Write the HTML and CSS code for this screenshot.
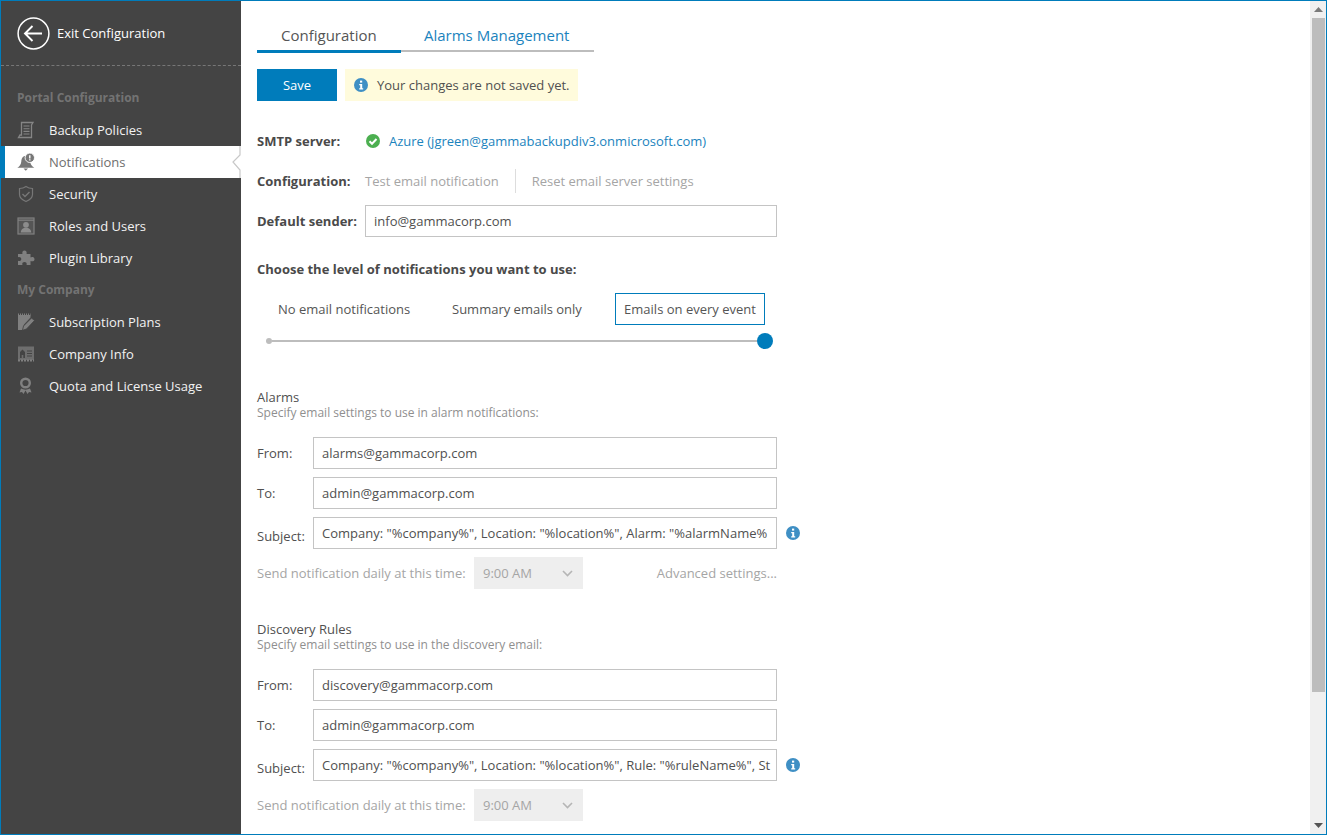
FILE: index.html
```html
<!DOCTYPE html>
<html lang="en">
<head>
<meta charset="utf-8">
<title>Portal Configuration - Notifications</title>
<link rel="stylesheet" href="styles.css">
</head>
<body>
<div class="window">
  <aside class="sidebar">
    <a class="exit">
      <svg class="exit-icon" width="33" height="33" viewBox="0 0 33 33"><circle cx="16.5" cy="16.5" r="15.4" fill="none" stroke="#fff" stroke-width="1.5"/><path d="M8 16.500h17M15.500 9l-7.500 7.500 7.500 7.500" fill="none" stroke="#fff" stroke-width="1.900"/></svg>
      <span>Exit Configuration</span>
    </a>
    <div class="nav">
      <div class="nav-heading">Portal Configuration</div>
      <a class="nav-item">
        <svg class="nav-icon" viewBox="0 0 18 18"><path d="M4.500 1.500H16l-1.500 2.500v12.500H1.500l1.500-2.500h1.500z" fill="none" stroke="#858585" stroke-width="1.300"/><path d="M6.500 5h6M6.500 7.700h6M6.500 10.400h6M6.500 13h6" stroke="#858585" stroke-width="1.100"/></svg>
        <span>Backup Policies</span>
      </a>
      <a class="nav-item active">
        <svg class="nav-icon" viewBox="0 0 18 18"><path d="M8.500 3C5.500 3 4.500 5.500 4.300 8.500 4.100 11.500 2.500 13.500 .3 14.800h17c-2-1.300-3.600-2.800-3.900-5z" fill="#777"/><path d="M6.500 15.500h4.500L8.800 17.800z" fill="#777"/><circle cx="12.800" cy="4.800" r="4.700" fill="#777" stroke="#fff" stroke-width=".9"/><path d="M12.800 2.200v3.300M12.800 6.200v1.200" stroke="#fff" stroke-width="1.400"/></svg>
        <span>Notifications</span>
        <svg class="notch" width="9" height="32" viewBox="0 0 9 32"><path d="M8 0v9l-7 7 7 8v8" fill="none" stroke="#c8c8c8" stroke-width="1.200"/></svg>
      </a>
      <a class="nav-item">
        <svg class="nav-icon" viewBox="0 0 18 18"><path d="M9 1.500c2 1.500 4 2 6.500 2v6c0 3.500-3 5.500-6.500 7-3.500-1.500-6.500-3.500-6.500-7v-6c2.500 0 4.500-.5 6.500-2z" fill="none" stroke="#777" stroke-width="1.200"/><path d="M5.500 9l2.500 2.500 4.500-4.500" fill="none" stroke="#777" stroke-width="1.400"/></svg>
        <span>Security</span>
      </a>
      <a class="nav-item">
        <svg class="nav-icon" viewBox="0 0 18 18"><rect x="1" y="1" width="16" height="16" fill="#555" stroke="#808080" stroke-width="1.200"/><path d="M1 3.200h16" stroke="#808080" stroke-width="1.200"/><circle cx="9" cy="7.800" r="2.900" fill="#8c8c8c"/><path d="M3.800 15.500c0-3 2.200-4.800 5.200-4.800s5.200 1.800 5.200 4.800z" fill="#8c8c8c"/></svg>
        <span>Roles and Users</span>
      </a>
      <a class="nav-item">
        <svg class="nav-icon" viewBox="0 0 18 18"><path d="M1 5h4.500C5 3.500 5.500 1.500 7.500 1.500S10 3.500 9.500 5h4v3.500c1-.8 4-.8 4 1.700s-3 2.500-4 1.700V16H9.500c.6-1.300 0-3-2-3s-2.600 1.700-2 3H1v-4.200c1.500.7 3.300 0 3.300-1.800S2.500 7.500 1 8.200z" fill="#808080"/></svg>
        <span>Plugin Library</span>
      </a>
      <div class="nav-heading">My Company</div>
      <a class="nav-item">
        <svg class="nav-icon" viewBox="0 0 18 18"><path d="M1 2h12.500v2.500L7 11.500l-1.500 5.500H1z" fill="#808080"/><path d="M1 1.500h12.500" stroke="#808080" stroke-dasharray="1 1" stroke-width="2"/><path d="M14.500 5l3 2.500-8 8.500-4 1.300 1-4.300z" fill="#808080" stroke="#444" stroke-width=".8"/></svg>
        <span>Subscription Plans</span>
      </a>
      <a class="nav-item">
        <svg class="nav-icon" viewBox="0 0 18 18"><path d="M1 1.500h16V15H1z" fill="#6e6e6e"/><path d="M1 15.500h16" stroke="#808080" stroke-width="2" stroke-dasharray="2 1"/><path d="M3 13V7l2.500-2.500L8 7v6H6.300v-3H4.700v3z" fill="#444"/><path d="M10 6h5M10 8.500h5M10 11h5" stroke="#444" stroke-width="1.200"/></svg>
        <span>Company Info</span>
      </a>
      <a class="nav-item">
        <svg class="nav-icon" viewBox="0 0 18 18"><circle cx="8.500" cy="6" r="4.300" fill="none" stroke="#808080" stroke-width="2.400"/><path d="M4 11.500l-1.500 4 2.500-.5 1.500 2 2-3.500 2 3.500 1.500-2 2.500.5-1.500-4c-2.500 1.500-6.500 1.500-9 0z" fill="#808080"/></svg>
        <span>Quota and License Usage</span>
      </a>
    </div>
  </aside>

  <main class="content">
    <nav class="tabs">
      <a class="tab tab-active">Configuration</a>
      <a class="tab">Alarms Management</a>
    </nav>

    <div class="toolbar">
      <button class="btn-save" type="button">Save</button>
      <div class="notice">
        <svg class="info" width="14" height="14" viewBox="0 0 14 14"><circle cx="7" cy="7" r="7" fill="#3f8fc4"/><rect x="6" y="2.600" width="2.200" height="2" fill="#fff"/><path d="M5.200 6h3v4.200h1v1.200H5.200v-1.200h1V7.200h-1z" fill="#fff"/></svg>
        <span>Your changes are not saved yet.</span>
      </div>
    </div>

    <div class="info-row smtp-row">
      <span class="info-label smtp-label">SMTP server:</span>
      <svg class="check" width="14" height="14" viewBox="0 0 14 14"><circle cx="7" cy="7" r="7" fill="#4caf50"/><path d="M3.500 7.200l2.500 2.500 4.500-4.700" fill="none" stroke="#fff" stroke-width="2"/></svg>
      <a class="link">Azure (jgreen@gammabackupdiv3.onmicrosoft.com)</a>
    </div>

    <div class="info-row config-row">
      <span class="info-label config-label">Configuration:</span>
      <a class="muted-link test-link">Test email notification</a>
      <span class="divider"></span>
      <a class="muted-link">Reset email server settings</a>
    </div>

    <div class="form-row sender-row">
      <span class="sender-label">Default sender:</span>
      <div class="input sender-input">info@gammacorp.com</div>
    </div>

    <div class="level-title">Choose the level of notifications you want to use:</div>
    <div class="levels">
      <span class="level level-first">No email notifications</span>
      <span class="level level-second">Summary emails only</span>
      <span class="level level-selected">Emails on every event</span>
    </div>
    <div class="slider"><span class="slider-start"></span><span class="slider-track"></span><span class="slider-handle"></span></div>

    <section class="group alarms">
      <h2 class="group-title">Alarms</h2>
      <p class="group-desc">Specify email settings to use in alarm notifications:</p>
      <div class="form-row"><span class="field-label">From:</span><div class="input field-input">alarms@gammacorp.com</div></div>
      <div class="form-row"><span class="field-label">To:</span><div class="input field-input">admin@gammacorp.com</div></div>
      <div class="form-row"><span class="field-label subject-label">Subject:</span><div class="input field-input">Company: "%company%", Location: "%location%", Alarm: "%alarmName%</div>
        <svg class="info info-side" width="14" height="14" viewBox="0 0 14 14"><circle cx="7" cy="7" r="7" fill="#3f8fc4"/><rect x="6" y="2.600" width="2.200" height="2" fill="#fff"/><path d="M5.200 6h3v4.200h1v1.200H5.200v-1.200h1V7.200h-1z" fill="#fff"/></svg>
      </div>
      <div class="form-row send-row">
        <span class="send-label">Send notification daily at this time:</span>
        <div class="select"><span>9:00 AM</span><svg width="11" height="7" viewBox="0 0 11 7"><path d="M1 1l4.500 4.500L10 1" fill="none" stroke="#b5b5b5" stroke-width="1.600"/></svg></div>
        <a class="muted-link advanced">Advanced settings...</a>
      </div>
    </section>

    <section class="group discovery">
      <h2 class="group-title">Discovery Rules</h2>
      <p class="group-desc">Specify email settings to use in the discovery email:</p>
      <div class="form-row"><span class="field-label">From:</span><div class="input field-input">discovery@gammacorp.com</div></div>
      <div class="form-row"><span class="field-label">To:</span><div class="input field-input">admin@gammacorp.com</div></div>
      <div class="form-row"><span class="field-label subject-label">Subject:</span><div class="input field-input">Company: "%company%", Location: "%location%", Rule: "%ruleName%", St</div>
        <svg class="info info-side" width="14" height="14" viewBox="0 0 14 14"><circle cx="7" cy="7" r="7" fill="#3f8fc4"/><rect x="6" y="2.600" width="2.200" height="2" fill="#fff"/><path d="M5.200 6h3v4.200h1v1.200H5.200v-1.200h1V7.200h-1z" fill="#fff"/></svg>
      </div>
      <div class="form-row send-row">
        <span class="send-label">Send notification daily at this time:</span>
        <div class="select"><span>9:00 AM</span><svg width="11" height="7" viewBox="0 0 11 7"><path d="M1 1l4.500 4.500L10 1" fill="none" stroke="#b5b5b5" stroke-width="1.600"/></svg></div>
      </div>
    </section>
  </main>

  <div class="scrollbar">
    <div class="arrow"><svg width="9" height="5" viewBox="0 0 9 5"><path d="M4.500 0L9 5H0z" fill="#7a7a7a"/></svg></div>
    <div class="thumb"></div>
    <div class="scroll-rest"></div>
    <div class="arrow"><svg width="9" height="5" viewBox="0 0 9 5"><path d="M0 0h9L4.500 5z" fill="#555"/></svg></div>
  </div>
</div>
</body>
</html>
```

FILE: styles.css
```css
* { box-sizing: border-box; }
html, body { margin: 0; padding: 0; }
body {
  font-family: "Open Sans", "Liberation Sans", sans-serif;
  font-size: 13px;
  color: #505050;
  background: #fff;
  overflow: hidden;
}
a { text-decoration: none; }

.window {
  display: flex;
  width: 1327px;
  height: 835px;
  border: 1px solid #007cbb;
  overflow: hidden;
}

/* Sidebar */
.sidebar {
  flex: 0 0 240px;
  background: #444;
  color: #f2f2f2;
}
.exit {
  display: flex;
  align-items: center;
  gap: 7px;
  height: 65px;
  padding-left: 16px;
  border-bottom: 1px dashed #777;
  color: #fff;
}
.nav { padding-top: 16px; }
.nav-heading {
  height: 32px;
  line-height: 32px;
  padding-left: 16px;
  font-weight: 700;
  font-size: 12px;
  color: #737373;
}
.nav-item {
  position: relative;
  display: flex;
  align-items: center;
  gap: 14px;
  height: 32px;
  padding-left: 16px;
  color: #f2f2f2;
}
.nav-icon { width: 18px; height: 18px; flex: none; }
.nav-item.active {
  padding-left: 12px;
  border-left: 4px solid #007cbb;
  background: #fff;
  color: #6e6e6e;
}
.notch { position: absolute; top: 0; right: 0; }

/* Content */
.content {
  flex: 1;
  min-width: 0;
  padding: 19px 0 0 16px;
  overflow: hidden;
}
.tabs { display: flex; height: 33px; }
.tab {
  height: 32px;
  line-height: 31px;
  padding: 0 25px 0 23px;
  font-size: 15px;
  color: #1b83bd;
  border-bottom: 2px solid #bdbdbd;
}
.tab-active {
  width: 144px;
  height: 33px;
  padding: 0 24px;
  color: #555;
  border-bottom: 3px solid #007cbb;
}
.toolbar { display: flex; gap: 8px; margin-top: 16px; }
.btn-save {
  width: 80px;
  height: 32px;
  border: 0;
  padding: 0;
  background: #007cbb;
  color: #fff;
  font: inherit;
}
.notice {
  display: flex;
  align-items: center;
  gap: 9px;
  width: 233px;
  height: 32px;
  padding-left: 9px;
  background: #fffbdc;
}
.info { flex: none; }

.info-row { display: flex; align-items: center; }
.info-label { font-weight: 700; color: #4a4a4a; }
.smtp-row { height: 24px; margin-top: 28px; }
.smtp-label { width: 109px; }
.check { flex: none; margin-right: 9px; }
.link { color: #1b83bd; }
.config-row { height: 24px; margin-top: 16px; }
.config-label { width: 108px; }
.muted-link { color: #a5a5a5; }
.test-link { margin-right: 16px; }
.divider { width: 1px; height: 24px; background: #ddd; margin-right: 16px; }

.form-row { display: flex; align-items: center; height: 32px; margin-bottom: 8px; width: 520px; position: relative; }
.sender-row { margin-top: 12px; margin-bottom: 0; }
.sender-label { width: 108px; font-weight: 700; color: #4a4a4a; white-space: nowrap; }
.input {
  height: 32px;
  line-height: 30px;
  padding: 0 8px;
  border: 1px solid #c4c4c4;
  white-space: nowrap;
  background: #fff;
  color: #505050;
}
.sender-input { width: 412px; }

.level-title { margin-top: 22px; height: 20px; line-height: 20px; font-weight: 700; color: #4a4a4a; }
.levels { display: flex; align-items: center; margin-top: 14px; height: 32px; }
.level { color: #555; }
.level-first { margin-left: 21px; width: 174px; }
.level-second { width: 163px; }
.level-selected {
  width: 150px;
  height: 32px;
  line-height: 30px;
  text-align: center;
  border: 1px solid #007cbb;
  white-space: nowrap;
}
.slider { display: flex; align-items: center; width: 516px; height: 16px; margin-top: 8px; padding-left: 9px; }
.slider-start { width: 6px; height: 6px; border-radius: 50%; background: #bdbdbd; flex: none; }
.slider-track { flex: 1; height: 2px; background: #bdbdbd; }
.slider-handle { width: 16px; height: 16px; border-radius: 50%; background: #007cbb; flex: none; }

.group-title { margin: 0; font-size: 13px; font-weight: 400; line-height: 16px; color: #505050; }
.group-desc { margin: 0 0 17px; font-size: 12px; line-height: 15px; color: #8f8f8f; }
.alarms { margin-top: 40px; }
.discovery { margin-top: 32px; }
.field-label { width: 56px; }
.subject-label { padding-top: 6px; }
.field-input { width: 464px; }
.info-side { position: absolute; left: 529px; top: 9px; }
.send-row { margin-bottom: 0; }
.send-label { width: 217px; color: #a5a5a5; white-space: nowrap; }
.select {
  display: flex;
  align-items: center;
  justify-content: space-between;
  width: 109px;
  height: 32px;
  padding: 0 10px 0 9px;
  background: #eee;
  color: #a5a5a5;
}
.advanced { margin-left: auto; }

/* Scrollbar */
.scrollbar {
  flex: 0 0 16px;
  display: flex;
  flex-direction: column;
  background: #f0f0f0;
}
.arrow { height: 17px; display: flex; align-items: center; justify-content: center; flex: none; }
.thumb { height: 674px; margin: 0 1px 0 2px; background: #bdbdbd; flex: none; }
.scroll-rest { flex: 1; }
```
